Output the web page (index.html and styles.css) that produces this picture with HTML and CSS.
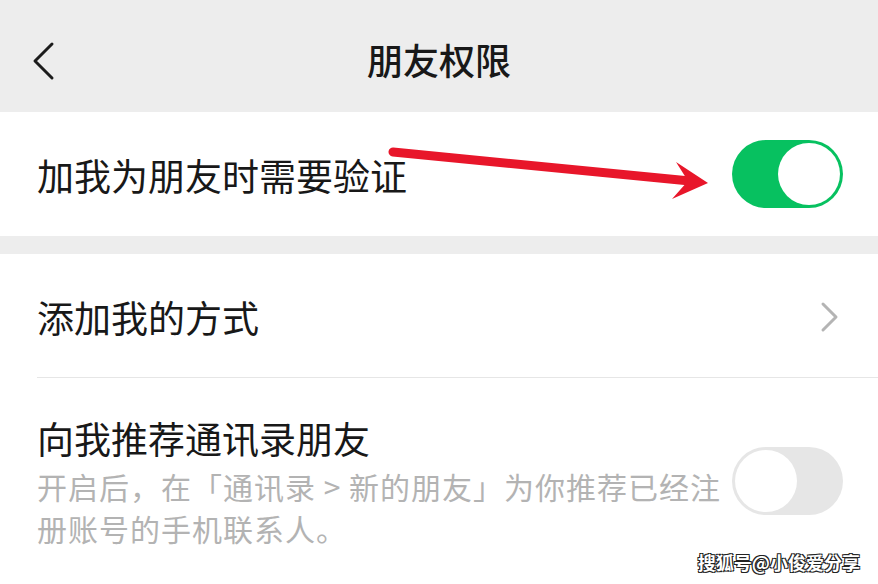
FILE: index.html
```html
<!DOCTYPE html>
<html lang="zh-CN">
<head>
    <meta charset="UTF-8">
    <meta name="viewport" content="width=device-width, initial-scale=1.0">
    <title>朋友权限</title>
    <link rel="stylesheet" href="styles.css">
</head>
<body>
    <header class="title-bar">
        <svg class="back-icon" width="24" height="40" viewBox="0 0 24 40">
            <polyline points="20,3 3,20 20,37" fill="none" stroke="#1c1c1c" stroke-width="3" stroke-linecap="round" stroke-linejoin="round"/>
        </svg>
        <h1 class="title">朋友权限</h1>
    </header>

    <section class="group">
        <div class="row">
            <span class="row-label">加我为朋友时需要验证</span>
            <div class="switch switch-on"><div class="knob"></div></div>
        </div>
    </section>

    <section class="group group-last">
        <div class="row row-link">
            <span class="row-label">添加我的方式</span>
            <svg class="arrow-icon" width="20" height="32" viewBox="0 0 20 32">
                <polyline points="3,3 16,16 3,29" fill="none" stroke="#b4b4b4" stroke-width="3" stroke-linecap="round" stroke-linejoin="round"/>
            </svg>
        </div>
        <div class="row row-tall">
            <div class="row-text">
                <p class="row-label">向我推荐通讯录朋友</p>
                <p class="row-desc">开启后，在「通讯录 &gt; 新的朋友」为你推荐已经注册账号的手机联系人。</p>
            </div>
            <div class="switch switch-off"><div class="knob"></div></div>
        </div>
    </section>

    <!-- red annotation arrow pointing to the switch -->
    <svg class="annotation" width="878" height="584" viewBox="0 0 878 584">
        <line x1="393" y1="152" x2="690" y2="181" stroke="#e8162a" stroke-width="9" stroke-linecap="round"/>
        <polygon points="708,183 676,162 688,181 672,199" fill="#e8162a"/>
    </svg>

    <div class="watermark">搜狐号@小俊爱分享</div>
</body>
</html>
```

FILE: styles.css
```css
* {
    margin: 0;
    padding: 0;
    box-sizing: border-box;
}
body {
    position: relative;
    width: 878px;
    height: 584px;
    overflow: hidden;
    background-color: #ededed;
    font-family: "Noto Sans CJK SC", "Noto Sans", sans-serif;
    color: #181818;
}
.title-bar {
    position: relative;
    display: flex;
    justify-content: center;
    align-items: center;
    height: 112px;
    padding-top: 6px;
}
.back-icon {
    position: absolute;
    left: 32px;
    top: 41px;
}
.title {
    font-size: 36px;
    font-weight: 500;
    line-height: 48px;
}
.group {
    background-color: #fff;
    margin-bottom: 18px;
}
.group-last {
    margin-bottom: 0;
    height: 330px;
}
.row {
    display: flex;
    justify-content: space-between;
    align-items: center;
    height: 124px;
    padding: 0 35px 0 37px;
}
.row-label {
    font-size: 37px;
    line-height: 48px;
    padding-top: 2px;
}
.row-link {
    position: relative;
    border-bottom: 1px solid #e6e6e6;
    margin-left: 37px;
    padding-left: 0;
    padding-right: 38px;
}
.arrow-icon {
    margin-top: 2px;
}
.row-tall {
    height: auto;
    padding-top: 34px;
    padding-bottom: 14px;
}
.row-text {
    width: 692px;
}
.row-desc {
    margin-top: 3px;
    font-size: 30px;
    line-height: 42px;
    letter-spacing: 1px;
    color: #b3b3b3;
}
.switch {
    display: flex;
    align-items: center;
    width: 111px;
    height: 68px;
    border-radius: 34px;
    padding: 3px;
    flex-shrink: 0;
}
.switch-on {
    justify-content: flex-end;
    background-color: #07c160;
}
.switch-off {
    justify-content: flex-start;
    background-color: #e6e6e6;
}
.knob {
    width: 62px;
    height: 62px;
    border-radius: 50%;
    background-color: #fff;
}
.annotation {
    position: absolute;
    left: 0;
    top: 0;
    pointer-events: none;
}
.watermark {
    position: absolute;
    right: 18px;
    bottom: 9px;
    font-size: 18px;
    font-weight: 700;
    color: #fff;
    text-shadow: 1px 1px 0 #222, -1px -1px 0 #222, 1px -1px 0 #222, -1px 1px 0 #222;
}
```
